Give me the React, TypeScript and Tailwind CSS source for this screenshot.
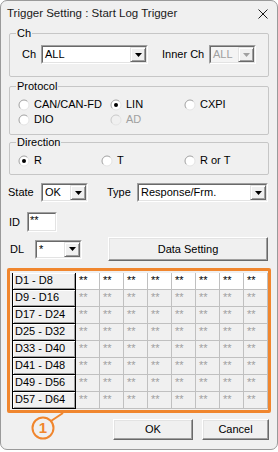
import React from "react";

const Tri = ({ color = "#000" }: { color?: string }) => (
  <svg width="7" height="4" viewBox="0 0 7 4">
    <polygon points="0,0 7,0 3.5,4" fill={color} />
  </svg>
);

function Combo({ className, text, disabled }: { className: string; text: string; disabled?: boolean }) {
  return (
    <div className={`flex h-[19px] border border-t-[#a0a0a0] border-l-[#a0a0a0] border-r-white border-b-white ${className}`}>
      <div
        className={`flex flex-1 border border-t-[#696969] border-l-[#696969] border-r-[#e3e3e3] border-b-[#e3e3e3] ${
          disabled ? "bg-[#f4f4f4]" : "bg-white"
        }`}
      >
        <span className={`flex-1 pl-[2px] leading-[15px] ${disabled ? "text-[#a0a0a0]" : "text-black"}`}>{text}</span>
        <div className="flex w-[16px] items-center justify-center border border-t-[#e3e3e3] border-l-[#e3e3e3] border-r-[#696969] border-b-[#696969] bg-[#f0f0f0] shadow-[inset_1px_1px_0_#fff,inset_-1px_-1px_0_#a0a0a0]">
          <Tri color={disabled ? "#a0a0a0" : "#000"} />
        </div>
      </div>
    </div>
  );
}

function Radio({ checked, disabled }: { checked?: boolean; disabled?: boolean }) {
  return (
    <svg width="12" height="12" viewBox="0 0 12 12" className="shrink-0">
      <circle cx="6" cy="6" r="5" fill={disabled ? "#f0f0f0" : "#fff"} />
      <path d="M2.46 9.54 A5 5 0 0 1 9.54 2.46" stroke={disabled ? "#c8c8c8" : "#a0a0a0"} fill="none" />
      <path d="M9.54 2.46 A5 5 0 0 1 2.46 9.54" stroke="#e3e3e3" fill="none" />
      {checked && <circle cx="6" cy="6" r="2" fill="#000" />}
    </svg>
  );
}

function RadioItem({ label, checked, disabled }: { label: string; checked?: boolean; disabled?: boolean }) {
  return (
    <div className="flex h-[15px] items-center gap-[4px]">
      <Radio checked={checked} disabled={disabled} />
      <span className={disabled ? "text-[#a0a0a0]" : "text-black"}>{label}</span>
    </div>
  );
}

const btn =
  "flex items-center justify-center border border-t-white border-l-white border-r-[#696969] border-b-[#696969] bg-[#f0f0f0] shadow-[inset_-1px_-1px_0_#a0a0a0,inset_1px_1px_0_#e3e3e3]";

const labels = ["D1 - D8", "D9 - D16", "D17 - D24", "D25 - D32", "D33 - D40", "D41 - D48", "D49 - D56", "D57 - D64"];

export default function App() {
  return (
    <div className="h-[452px] w-[278px] bg-white">
      <div className="relative h-[450px] w-[278px] overflow-hidden rounded-[7px] border border-[#9a9a9a] bg-[#f0f0f0] font-['Liberation_Sans',Arial,sans-serif] text-[11px] text-black">
        {/* title bar */}
        <div className="flex h-[26px] items-center justify-between pl-[6px] pr-[9px]">
          <span className="text-[11.5px] text-[#1a1a1a]">Trigger Setting : Start Log Trigger</span>
          <svg width="10" height="10" viewBox="0 0 10 10">
            <path d="M0.5 0.5 L9.5 9.5 M9.5 0.5 L0.5 9.5" stroke="#1a1a1a" strokeWidth="1" />
          </svg>
        </div>

        {/* Ch group */}
        <fieldset className="ml-[8px] w-[260px] rounded-[2px] border border-[#c6c6c6] pb-[12px]">
          <legend className="ml-[6px] px-[1px] leading-[13px]">Ch</legend>
          <div className="mt-[5px] flex h-[19px] items-center pl-[12px]">
            <span className="w-[19px]">Ch</span>
            <Combo className="w-[107px]" text="ALL" />
            <span className="ml-[14px] w-[47px]">Inner Ch</span>
            <Combo className="w-[47px]" text="ALL" disabled />
          </div>
        </fieldset>

        {/* Protocol group */}
        <fieldset className="ml-[8px] mt-[3px] w-[260px] rounded-[2px] border border-[#c6c6c6] pb-[7px]">
          <legend className="ml-[6px] px-[1px] leading-[13px]">Protocol</legend>
          <div className="mt-[4px] grid grid-cols-[92px_74px_1fr] pl-[8px]">
            <RadioItem label="CAN/CAN-FD" />
            <RadioItem label="LIN" checked />
            <RadioItem label="CXPI" />
            <RadioItem label="DIO" />
            <RadioItem label="AD" disabled />
          </div>
        </fieldset>

        {/* Direction group */}
        <fieldset className="ml-[8px] mt-[1px] w-[260px] rounded-[2px] border border-[#c6c6c6] pb-[6px]">
          <legend className="ml-[6px] px-[1px] leading-[13px]">Direction</legend>
          <div className="mt-[4px] grid grid-cols-[83px_83px_1fr] pl-[8px]">
            <RadioItem label="R" checked />
            <RadioItem label="T" />
            <RadioItem label="R or T" />
          </div>
        </fieldset>

        {/* State / Type */}
        <div className="ml-[7px] mt-[8px] flex h-[19px] items-center">
          <span className="w-[33px]">State</span>
          <Combo className="w-[47px]" text="OK" />
          <span className="ml-[19px] w-[30px]">Type</span>
          <Combo className="w-[131px]" text="Response/Frm." />
        </div>

        {/* ID */}
        <div className="ml-[8px] mt-[10px] flex h-[20px] items-center">
          <span className="w-[18px]">ID</span>
          <div className="h-[20px] w-[30px] border border-t-[#a0a0a0] border-l-[#a0a0a0] border-r-white border-b-white">
            <div className="h-full border border-t-[#696969] border-l-[#696969] border-r-[#e3e3e3] border-b-[#e3e3e3] bg-white pl-[1px] leading-[13px]">
              **
            </div>
          </div>
        </div>

        {/* DL + Data Setting */}
        <div className="ml-[9px] mt-[5px] flex h-[24px] items-center">
          <span className="w-[25px]">DL</span>
          <Combo className="w-[47px]" text="*" />
          <div className={`${btn} ml-[26px] h-[24px] w-[160px]`}>Data Setting</div>
        </div>

        {/* data grid with orange highlight */}
        <div className="ml-[6px] mt-[7px] h-[145px] w-[264px] rounded-[2px] border-[3px] border-[#f0862e] pl-[2px] pt-[2px]">
          {labels.map((l, r) => (
            <div key={l} className="flex h-[17px]">
              <div className="w-[64px] border-b border-l border-r border-black bg-[#f0f0f0] pl-[2px] leading-[15px] shadow-[inset_1px_1px_0_#fff,inset_-1px_-1px_0_#a0a0a0]">
                {l}
              </div>
              {Array.from({ length: 8 }).map((_, c) => (
                <div
                  key={c}
                  className={`w-[24px] border-b border-r border-[#c0c0c0] pl-[3px] leading-[14px] ${
                    r === 0 ? "bg-white text-black" : "bg-[#f0f0f0] text-[#a0a0a0]"
                  }`}
                >
                  **
                </div>
              ))}
            </div>
          ))}
        </div>

        {/* OK / Cancel */}
        <div className="mr-[8px] mt-[6px] flex justify-end gap-[9px]">
          <div className={`${btn} h-[21px] w-[80px]`}>OK</div>
          <div className={`${btn} h-[21px] w-[67px]`}>Cancel</div>
        </div>

        {/* annotation ① */}
        <div className="absolute left-[30px] top-[410px] h-[30px] w-[34px]">
          <svg width="34" height="30" viewBox="0 0 34 30" className="absolute left-0 top-0">
            <circle cx="12" cy="17" r="10.5" fill="none" stroke="#f0862e" strokeWidth="2" />
            <path d="M20 10 L32 2" stroke="#f0862e" strokeWidth="2" />
          </svg>
          <span className="absolute left-[2px] top-[7px] w-[20px] text-center text-[15px] font-bold leading-[20px] text-[#f0862e]">
            1
          </span>
        </div>
      </div>
    </div>
  );
}
